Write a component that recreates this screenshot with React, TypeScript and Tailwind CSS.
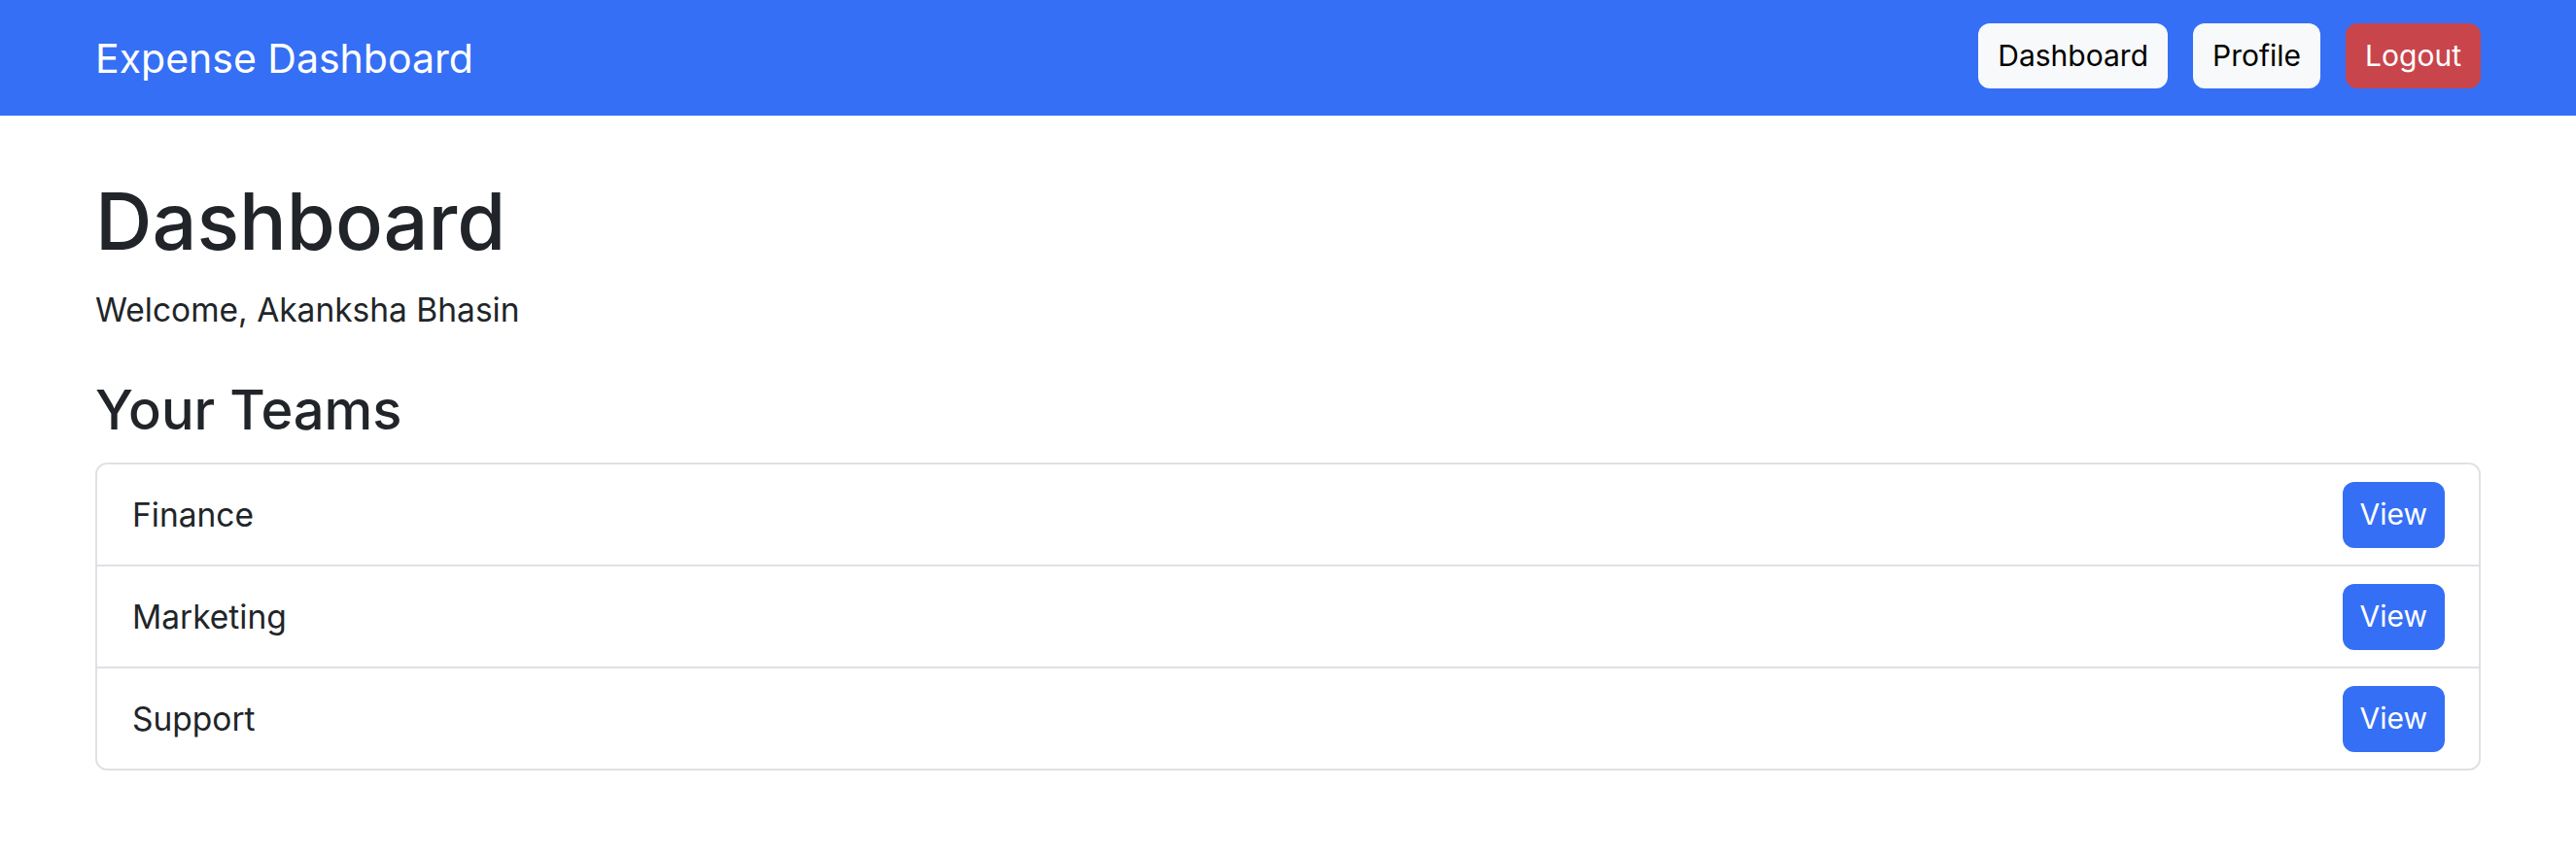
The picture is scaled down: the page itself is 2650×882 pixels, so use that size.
import React from "react";

const teams = ["Finance", "Marketing", "Support"];

export default function App() {
  return (
    <div className="min-h-screen bg-white font-['Inter','Liberation_Sans',sans-serif] text-[#212529]">
      <nav className="flex h-[119px] items-center justify-between bg-[#356ff5] px-[98px]">
        <span className="text-[41px] leading-[60px] text-white">Expense Dashboard</span>
        <div className="-mt-[4px] flex items-center gap-[26px]">
          <button className="h-[67px] rounded-[12px] bg-[#f8f9fa] px-[20px] text-[30px] leading-[45px] text-black">
            Dashboard
          </button>
          <button className="h-[67px] rounded-[12px] bg-[#f8f9fa] px-[20px] text-[30px] leading-[45px] text-black">
            Profile
          </button>
          <button className="h-[67px] rounded-[12px] bg-[#c9454c] px-[20px] text-[30px] leading-[45px] text-white">
            Logout
          </button>
        </div>
      </nav>
      <main className="px-[98px] pt-[61px]">
        <h1 className="text-[81px] font-medium leading-[96px]">Dashboard</h1>
        <p className="mt-[19px] text-[33.5px] leading-[48px]">Welcome, Akanksha Bhasin</p>
        <h2 className="mt-[46px] text-[56px] font-medium leading-[67px]">Your Teams</h2>
        <div className="mt-[20px] overflow-hidden rounded-[12px] border-2 border-[#dee2e6]">
          {teams.map((t, i) => (
            <div
              key={t}
              className={
                "flex items-center justify-between py-[17.5px] pl-[36px] pr-[35px] " +
                (i > 0 ? "border-t-2 border-[#dee2e6]" : "")
              }
            >
              <span className="text-[33.5px] leading-[48px]">{t}</span>
              <button className="h-[68px] rounded-[12px] bg-[#356ff5] px-[18px] text-[30px] leading-[45px] text-white">
                View
              </button>
            </div>
          ))}
        </div>
      </main>
    </div>
  );
}
